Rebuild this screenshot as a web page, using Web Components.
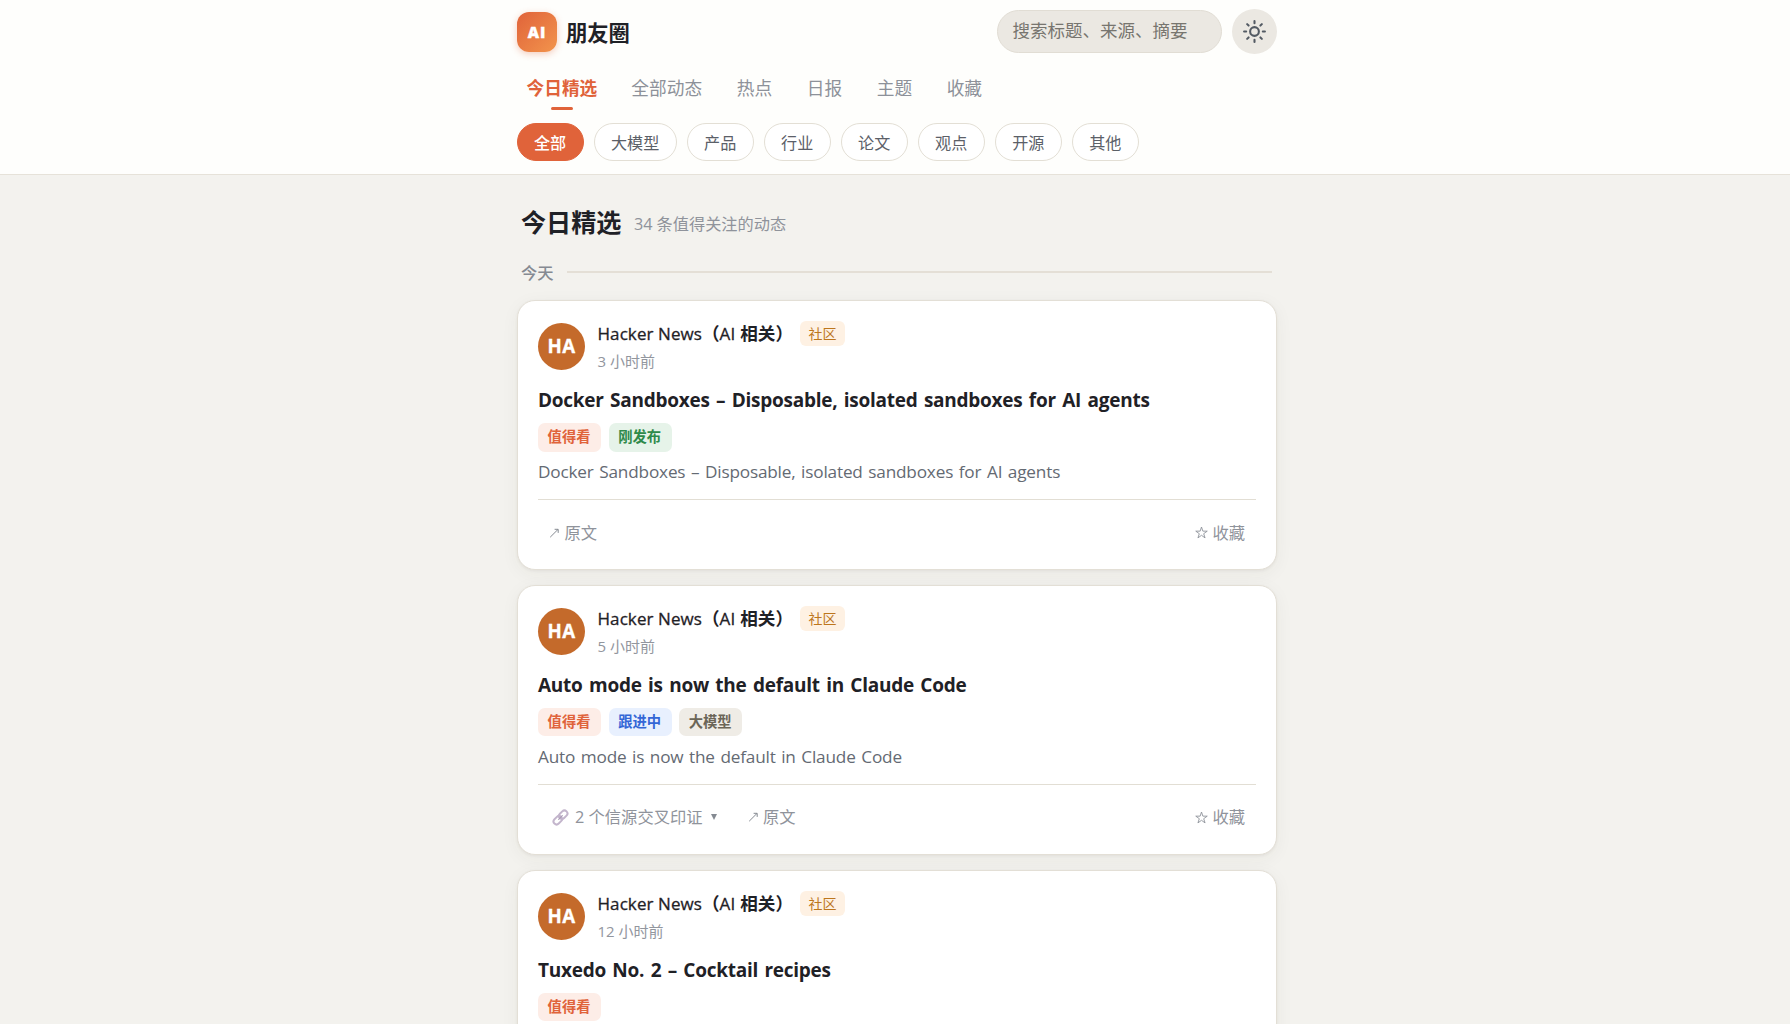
<!DOCTYPE html>
<html lang="zh-CN">
<head>
<meta charset="utf-8">
<title>AI 朋友圈</title>
<style>
html,body{margin:0;height:1024px;overflow:hidden}
body{background:#f3f2ee;color:#1f2126;font-family:"Open Sans","Noto Sans CJK SC",sans-serif;font-size:16px}
</style>
</head>
<body>
<feed-app></feed-app>
<script>
const define=(name,css,html,setup)=>{
  const t=document.createElement('template');
  t.innerHTML=`<style>*{box-sizing:border-box}:host{display:block;box-sizing:border-box;white-space:nowrap}${css}</style>${html}`;
  customElements.define(name,class extends HTMLElement{
    constructor(){super();this.attachShadow({mode:'open'}).appendChild(t.content.cloneNode(true));}
    connectedCallback(){if(setup)setup(this,this.shadowRoot);}
  });
};

define('brand-mark',`
:host{display:flex;align-items:center;gap:9px;height:40px}
.logo{width:40px;height:40px;border-radius:12px;background:linear-gradient(135deg,#e0633a,#f2944c);box-shadow:0 2px 7px rgba(224,99,58,.32);color:#fff;font-weight:800;font-size:15.5px;letter-spacing:1px;-webkit-text-stroke:.4px #fff;display:flex;align-items:center;justify-content:center;line-height:40px;padding-top:1px}
.name{font-size:21.3px;font-weight:700;line-height:40px;padding-top:2px}
`,`<div class="logo">AI</div><div class="name"><slot></slot></div>`);

define('search-box',`
:host{width:225px;height:43px;border-radius:22px;background:#ebe8e2;border:1px solid #e1ddd4;padding:0 14.5px;color:#77756f;font-size:17.5px;line-height:38px}
`,`<slot></slot>`);

define('theme-button',`
:host{width:45px;height:45px;border-radius:50%;background:#ebe8e2;color:#535a63;display:flex;align-items:center;justify-content:center}
svg{display:block}
`,`<svg width="25" height="25" viewBox="0 0 24 24" fill="none" stroke="currentColor" stroke-width="2" stroke-linecap="round"><circle cx="12" cy="12" r="4.2"/><path d="M12 2v2M12 20v2M4.93 4.93l1.41 1.41M17.66 17.66l1.41 1.41M2 12h2M20 12h2M6.34 17.66l-1.41 1.41M19.07 4.93l-1.41 1.41"/></svg>`);

define('nav-tab',`
:host{height:42px;padding:0 9px;font-size:17.7px;line-height:41px;color:#8d9199;display:flex;flex-direction:column;align-items:center}
:host([active]){color:#e0633a;font-weight:700;padding:0 8.5px 0 9.5px}
i{display:none;width:22px;height:3px;border-radius:2px;background:#e0633a;margin-top:-2px}
:host([active]) i{display:block}
`,`<span><slot></slot></span><i></i>`);

define('filter-chip',`
:host{height:38px;border-radius:19px;border:1px solid #e3dfd5;background:#fff;color:#5b6068;font-size:16.1px;line-height:38px;padding:0 16.9px 0 15.95px}
:host([active]){background:#e0633a;border-color:#e0633a;color:#fff;font-weight:500}
`,`<slot></slot>`);

define('app-header',`
:host{height:175px;background:#fefefc;border-bottom:1px solid #e6e2d9}
.in{width:760px;margin-left:517px;display:flex;flex-direction:column}
.top{display:flex;align-items:center;height:45px;margin-top:9px}
brand-mark{flex:1}
search-box{margin-right:10px}
nav{display:flex;gap:16.6px;margin-top:14px;height:42px}
.chips{display:flex;gap:10px;margin-top:13px}
`,`<div class="in"><div class="top"><brand-mark>朋友圈</brand-mark><search-box>搜索标题、来源、摘要</search-box><theme-button></theme-button></div>
<nav><nav-tab active>今日精选</nav-tab><nav-tab>全部动态</nav-tab><nav-tab>热点</nav-tab><nav-tab>日报</nav-tab><nav-tab>主题</nav-tab><nav-tab>收藏</nav-tab></nav>
<div class="chips"><filter-chip active>全部</filter-chip><filter-chip>大模型</filter-chip><filter-chip>产品</filter-chip><filter-chip>行业</filter-chip><filter-chip>论文</filter-chip><filter-chip>观点</filter-chip><filter-chip>开源</filter-chip><filter-chip>其他</filter-chip></div></div>`);

define('feed-heading',`
:host{display:flex;gap:12.5px;height:40px;line-height:40px;padding-left:4px}
b{font-size:25.1px}
span{font-size:16.2px;color:#8f939b;line-height:45px}
`,`<b><slot></slot></b><span><slot name="count"></slot></span>`);

define('day-divider',`
:host{display:flex;align-items:center;gap:13px;height:24px;padding:0 5px 0 4px;font-size:16.3px;line-height:24px;color:#858a92;font-weight:500}
i{flex:1;height:2px;background:#e4dfd6;margin-top:-2px}
`,`<slot></slot><i></i>`);

define('tag-pill',`
:host{height:28.5px;border-radius:7px;padding:0 10.6px 0 9.6px;font-size:14.3px;line-height:28px;font-weight:700;background:#fdede7;color:#e0633a}
:host([kind=new]){background:#e6f3e9;color:#2f8a4b}
:host([kind=follow]){background:#e8f0fe;color:#3467d6}
:host([kind=topic]){background:#efece6;color:#6b6557}
`,`<slot></slot>`);

define('source-line',`
:host{display:flex;gap:12.5px;height:49px}
.av{width:47px;height:47px;margin-top:2px;border-radius:50%;background:#c46a2b;color:#fff;font-weight:700;font-size:18.7px;letter-spacing:.3px;-webkit-text-stroke:.3px #fff;line-height:46px;text-align:center}
.row{display:flex;align-items:center;height:25px}
.n{font-size:17px;font-weight:500;line-height:25px;width:202.5px;display:flex}
.en,.ai{-webkit-text-stroke:.3px #1f2126}
.en{letter-spacing:.08px}.ai{letter-spacing:.25px}
b{font-size:17.6px;font-weight:700}
em{font-style:normal;height:25px;border-radius:6px;background:#fef1e3;color:#bd761c;font-size:14px;line-height:25px;padding:0 8.5px}
.t{font-size:15px;color:#92969e;line-height:22px;margin-top:4px}
`,`<div class="av">HA</div><div><div class="row"><div class="n"><span class="en">Hacker News</span><b>（</b><span class="ai">AI&nbsp;</span><b>相关）</b></div><em>社区</em></div><div class="t"><slot></slot></div></div>`);

define('card-actions',`
:host{display:flex;align-items:center;height:66px;border-top:1px solid #e2ded4;color:#8f939b;font-size:16.3px;line-height:24px;padding:0 11px}
.sources{display:none;align-items:center;margin:0 31px 0 2.5px}
:host([sources]) .sources{display:flex}
.sources span{margin:0 8px 0 6.5px}
.grow{flex:1}
.act{display:flex;align-items:center}
.act span{margin-left:4.5px}
svg{display:block;flex:none}
`,`<div class="sources"><svg width="17" height="17" viewBox="0 0 17 17" fill="none" stroke-linecap="round"><g stroke="#c3b5cc" stroke-width="2"><rect x="-4.7" y="-3" width="9.4" height="6" rx="3" transform="translate(11.2 5.7) rotate(-45)"/><rect x="-4.7" y="-3" width="9.4" height="6" rx="3" transform="translate(5.8 11.2) rotate(-45)"/></g><path d="M6.7 10.3l3.6-3.6" stroke="#a99bb5" stroke-width="1.2"/></svg><span>2 个信源交叉印证</span><svg width="6" height="6" viewBox="0 0 6 6"><path d="M0 0h6L3 6z" fill="#858a92"/></svg></div>
<div class="act"><svg width="11" height="10" viewBox="0 0 11 10" fill="none" stroke="#858a92" stroke-width="1"><path d="M1.2 9.2L9 1.4M5.6 1.3h3.6v3.6"/></svg><span>原文</span></div><div class="grow"></div>
<div class="act"><svg width="13" height="13" viewBox="0 0 13 13" fill="none" stroke="#8f939b" stroke-width=".9"><path d="M6.5 1l1.35 4.15h4.4L8.7 7.7l1.35 4.2-3.55-2.6-3.55 2.6L4.3 7.7.75 5.15h4.4z"/></svg><span>收藏</span></div>`);

define('feed-card',`
:host{height:270px;border:1px solid #e3dfd6;border-radius:18px;background:#fff;padding:20px 20px 0;box-shadow:0 1px 3px rgba(60,50,30,.06),0 4px 18px rgba(60,50,30,.05)}
h2{margin:15px 0 0;font-size:19px;line-height:30px;height:30px;font-weight:700;letter-spacing:-.26px;word-spacing:1.75px}
.tags{display:flex;gap:7.5px;margin-top:8px;height:28.5px}
p{margin:5.5px 0 0;font-size:17.2px;line-height:30px;height:30px;color:#646a73;letter-spacing:-.18px;word-spacing:1.3px}
card-actions{margin-top:12px}
`,`<source-line></source-line><h2></h2><div class="tags"><slot></slot></div><p></p><card-actions></card-actions>`,(el,r)=>{
  const title=el.getAttribute('headline');
  r.querySelector('source-line').textContent=el.getAttribute('time');
  const h=r.querySelector('h2'),p=r.querySelector('p'),a=r.querySelector('card-actions');
  h.textContent=title;
  if(el.hasAttribute('brief')){p.remove();a.remove();return;}
  p.textContent=title;
  a.toggleAttribute('sources',el.hasAttribute('sources'));
});

define('feed-app',`
:host{height:1024px;overflow:hidden}
main{width:760px;margin-left:517px;padding-top:27px}
day-divider{margin-top:19px}
.list{display:flex;flex-direction:column;gap:14.8px;margin-top:15px}
`,`<app-header></app-header><main><feed-heading>今日精选<span slot="count">34 条值得关注的动态</span></feed-heading><day-divider>今天</day-divider>
<div class="list">
<feed-card time="3 小时前" headline="Docker Sandboxes – Disposable, isolated sandboxes for AI agents"><tag-pill>值得看</tag-pill><tag-pill kind="new">刚发布</tag-pill></feed-card>
<feed-card time="5 小时前" headline="Auto mode is now the default in Claude Code" sources><tag-pill>值得看</tag-pill><tag-pill kind="follow">跟进中</tag-pill><tag-pill kind="topic">大模型</tag-pill></feed-card>
<feed-card time="12 小时前" headline="Tuxedo No. 2 – Cocktail recipes" brief><tag-pill>值得看</tag-pill></feed-card>
</div></main>`);
</script>
</body>
</html>
